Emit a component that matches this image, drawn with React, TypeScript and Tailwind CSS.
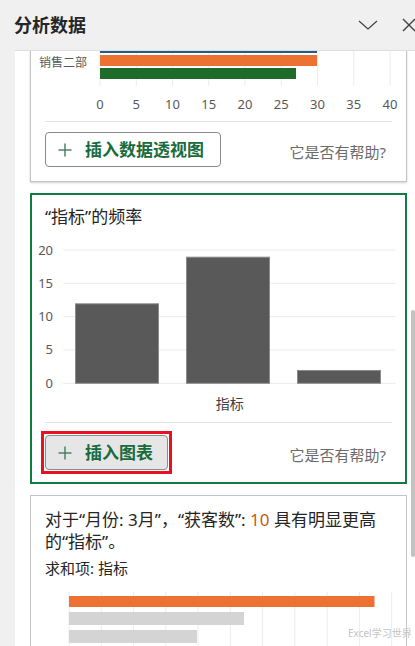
import React from "react";

const FONT = "font-['Noto_Sans','Noto_Sans_CJK_SC',sans-serif]";

function Plus() {
  return (
    <svg width="14" height="14" viewBox="0 0 14 14" className="shrink-0">
      <line x1="7" y1="0.5" x2="7" y2="13.5" stroke="#3f7b58" strokeWidth="1.4" />
      <line x1="0.5" y1="7" x2="13.5" y2="7" stroke="#3f7b58" strokeWidth="1.4" />
    </svg>
  );
}

function Helpful() {
  return (
    <span className="mr-[6px] mt-[5px] text-[15px] leading-[20px] text-[#6b6b6b]">
      它是否有帮助?
    </span>
  );
}

function Chart1() {
  const ticks = [0, 5, 10, 15, 20, 25, 30, 35, 40];
  return (
    <svg width="347" height="65" className="block overflow-visible">
      {ticks.map((t, i) => (
        <line
          key={t}
          x1={55 + i * 36.25}
          x2={55 + i * 36.25}
          y1={0}
          y2={36}
          stroke="#ececec"
          strokeWidth="1"
        />
      ))}
      <rect x="55" y="0" width="217" height="3" fill="#1f5f86" />
      <rect x="55" y="5" width="217" height="11" fill="#ed7132" />
      <rect x="55" y="18" width="196" height="11" fill="#1e6b2a" />
      <text x="-6" y="16.5" fontSize="12" fill="#595959">
        销售二部
      </text>
      {ticks.map((t, i) => (
        <text
          key={"l" + t}
          x={55 + i * 36.25}
          y={58.5}
          fontSize="13"
          fill="#595959"
          textAnchor="middle"
        >
          {t}
        </text>
      ))}
    </svg>
  );
}

function Chart2() {
  const y = (v: number) => 154.3 - v * 6.665;
  const ticks = [20, 15, 10, 5, 0];
  const bars = [
    { x: 30, v: 12 },
    { x: 141, v: 19 },
    { x: 252, v: 2 },
  ];
  return (
    <svg width="347" height="186" className="block overflow-visible">
      {ticks.map((t) => (
        <g key={t}>
          <line x1={18} x2={351} y1={y(t)} y2={y(t)} stroke="#ececec" strokeWidth="1" />
          <text x={8} y={y(t) + 4.5} fontSize="13" fill="#595959" textAnchor="end">
            {t}
          </text>
        </g>
      ))}
      {bars.map((b) => (
        <rect
          key={b.x}
          x={b.x + 0.5}
          y={y(b.v) + 0.5}
          width={83}
          height={y(0) - y(b.v) - 0.5}
          fill="#595959"
          stroke="#8c8c8c"
          strokeWidth="1"
        />
      ))}
      <text x={184.7} y={180} fontSize="14" fill="#404040" textAnchor="middle">
        指标
      </text>
    </svg>
  );
}

function Chart3() {
  const grid = Array.from({ length: 11 }, (_, i) => 24 + i * 32.27);
  return (
    <svg width="347" height="80" className="block overflow-visible">
      {grid.map((gx) => (
        <line key={gx} x1={gx} x2={gx} y1={14} y2={80} stroke="#ececec" strokeWidth="1" />
      ))}
      <rect x="24" y="18" width="305.5" height="11" fill="#ed7132" />
      <rect x="24" y="34" width="175" height="13" fill="#d4d4d4" />
      <rect x="24" y="52" width="128" height="13" fill="#d4d4d4" />
      <text x="0" y="78" fontSize="13" fill="#404040">
        区
      </text>
    </svg>
  );
}

export default function App() {
  return (
    <div className={`relative w-[415px] h-[646px] overflow-hidden bg-[#f0f0f0] ${FONT}`}>
      {/* Header */}
      <div className="flex h-[50px] items-center justify-between pl-[14px]">
        <span className="text-[18px] font-bold leading-[24px] text-[#262626]">分析数据</span>
        <div className="flex items-center">
          <svg width="20" height="12" viewBox="0 0 20 12" className="mr-[24px]">
            <polyline points="1,2 10,10 19,2" fill="none" stroke="#444" strokeWidth="1.3" />
          </svg>
          <svg width="14" height="14" viewBox="0 0 14 14" className="mr-[-1px]">
            <line x1="1" y1="1" x2="13" y2="13" stroke="#444" strokeWidth="1.4" />
            <line x1="13" y1="1" x2="1" y2="13" stroke="#444" strokeWidth="1.4" />
          </svg>
        </div>
      </div>

      {/* Body */}
      <div className="flex h-[596px]">
        <div className="w-[15px] shrink-0" />
        <div className="flex-1 overflow-hidden bg-white border-t border-[#dedede] pl-[15px] pr-[8px]">
          {/* Card 1 (scrolled, top cut off) */}
          <div className="-mt-px border border-t-0 border-[#c4c4c4] bg-white px-[14px] pb-[14px] shadow-[0_1px_2px_rgba(0,0,0,0.18)]">
            <Chart1 />
            <div className="mt-[6px] h-px bg-[#e3e3e3]" />
            <div className="mt-[10px] flex items-center justify-between">
              <div className="flex h-[35px] w-[176px] items-center gap-[13px] rounded-[4px] border border-[#8a8a8a] bg-white pl-[12px]">
                <Plus />
                <span className="text-[17px] font-bold leading-[22px] text-[#1a6b3c]">插入数据透视图</span>
              </div>
              <Helpful />
            </div>
          </div>

          {/* Card 2 */}
          <div className="mt-[11px] border-2 border-[#107c41] bg-white px-[13px] pb-[8px] pt-[10px]">
            <div className="text-[17px] leading-[24px] text-[#252525]">“指标”的频率</div>
            <Chart2 />
            <div className="mt-[7px] h-px bg-[#e3e3e3]" />
            <div className="mt-[8px] flex items-center justify-between">
              <div className="-ml-[4px] border-[3px] border-[#e81123] p-px">
                <div className="flex h-[35px] w-[123px] items-center gap-[13px] rounded-[4px] border border-[#8c8c8c] bg-[#e6e6e6] pl-[12px]">
                  <Plus />
                  <span className="text-[17px] font-bold leading-[22px] text-[#1a6b3c]">插入图表</span>
                </div>
              </div>
              <Helpful />
            </div>
          </div>

          {/* Card 3 */}
          <div className="mt-[11px] border border-[#c4c4c4] bg-white px-[14px] pt-[13px]">
            <div className="text-[17px] leading-[22px] text-[#252525]">
              <div>
                对于“月份: 3月”，“获客数”: <span className="text-[#c55a11]">10</span> 具有明显更高
              </div>
              <div>的“指标”。</div>
            </div>
            <div className="mt-[5px] text-[15px] leading-[20px] text-[#252525]">求和项: 指标</div>
            <Chart3 />
          </div>
        </div>
      </div>

      {/* Scrollbar */}
      <div className="absolute left-[411px] top-[310px] h-[247px] w-[4px] rounded-full bg-[#c2c2c2]" />

      {/* Watermark */}
      <div className="absolute left-[348px] top-[627px] whitespace-nowrap text-[10px] leading-[13px] text-[#c4c4c4]">
        Excel学习世界
      </div>
    </div>
  );
}
